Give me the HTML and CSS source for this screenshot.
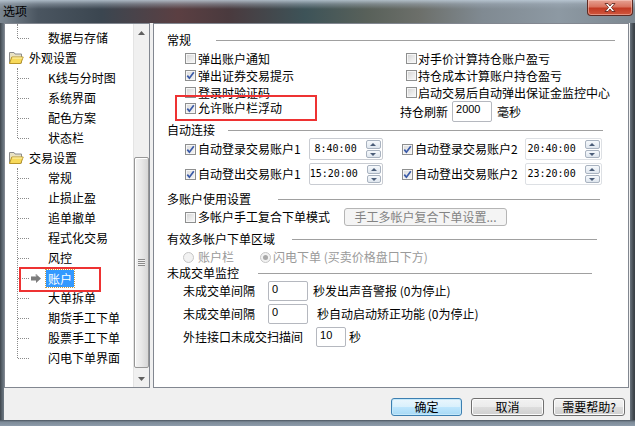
FILE: index.html
```html
<!DOCTYPE html>
<html lang="zh-CN">
<head>
<meta charset="utf-8">
<title>选项</title>
<link rel="stylesheet" href="styles.css">
</head>
<body>
<div class="window">
  <div class="titlebar">
    <span class="title">选项</span>
    <div class="close">
      <svg width="14" height="11" viewBox="0 0 14 11"><path d="M2 1.5h3l2 2.5 2-2.5h3l-3.5 4 3.5 4h-3L7 7 5 9.5H2l3.5-4z" fill="#fff" stroke="#5a1a12" stroke-width="0.8"/></svg>
    </div>
  </div>
  <div class="frame">
    <div class="client">
      <div class="main">
        <div class="tree">
          <div class="tree-body">
            <div class="children first">
              <div class="leaf">数据与存储</div>
            </div>
            <div class="folder">
              <svg class="ficon" width="16" height="14" viewBox="0 0 16 14"><path d="M1.5 1.5h4.5l1 1.5h6.5v9h-12z" fill="#e9e2c4" stroke="#8c8c8c"/><path d="M1.5 12.5l2.3-6.5h11.4l-2.4 6.5z" fill="#f7d95a" stroke="#b8962a"/><path d="M4.3 7h10.2" stroke="#fff4b8"/></svg>
              <span>外观设置</span>
            </div>
            <div class="children">
              <div class="leaf">K线与分时图</div>
              <div class="leaf">系统界面</div>
              <div class="leaf">配色方案</div>
              <div class="leaf">状态栏</div>
            </div>
            <div class="folder">
              <svg class="ficon" width="16" height="14" viewBox="0 0 16 14"><path d="M1.5 1.5h4.5l1 1.5h6.5v9h-12z" fill="#e9e2c4" stroke="#8c8c8c"/><path d="M1.5 12.5l2.3-6.5h11.4l-2.4 6.5z" fill="#f7d95a" stroke="#b8962a"/><path d="M4.3 7h10.2" stroke="#fff4b8"/></svg>
              <span>交易设置</span>
            </div>
            <div class="children">
              <div class="leaf">常规</div>
              <div class="leaf">止损止盈</div>
              <div class="leaf">追单撤单</div>
              <div class="leaf">程式化交易</div>
              <div class="leaf">风控</div>
              <div class="leaf current">
                <svg class="arrow" width="10" height="9" viewBox="0 0 10 9"><path d="M0 2.5h5V0l5 4.5L5 9V6.5H0z" fill="#7c7c7c"/><path d="M0 2.5h5V0l2 1.8" fill="none" stroke="#b8b8b8"/></svg>
                <span class="sel">账户</span>
                <div class="mark"></div>
              </div>
              <div class="leaf">大单拆单</div>
              <div class="leaf">期货手工下单</div>
              <div class="leaf">股票手工下单</div>
              <div class="leaf">闪电下单界面</div>
            </div>
          </div>
          <div class="vscroll">
            <div class="sbtn"><svg width="7" height="4" viewBox="0 0 7 4"><path d="M0 4L3.5 0 7 4z" fill="#5f5f5f"/></svg></div>
            <div class="track"><div class="thumb"><span class="grip"></span></div></div>
            <div class="sbtn"><svg width="7" height="4" viewBox="0 0 7 4"><path d="M0 0h7L3.5 4z" fill="#5f5f5f"/></svg></div>
          </div>
        </div>

        <div class="panel">
          <div class="gh g1"><span>常规</span><i class="line"></i></div>
          <div class="cbgrid">
            <label class="cb"><span class="box"></span>弹出账户通知</label>
            <label class="cb r"><span class="box"></span>对手价计算持仓账户盈亏</label>
            <label class="cb"><span class="box on"><svg width="9" height="9" viewBox="0 0 9 9"><path d="M1.3 4.6l2.1 2.6L7.8 1.2" fill="none" stroke="#3a5aa8" stroke-width="1.7"/></svg></span>弹出证券交易提示</label>
            <label class="cb r"><span class="box"></span>持仓成本计算账户持仓盈亏</label>
            <label class="cb"><span class="box"></span>登录时验证码</label>
            <label class="cb r"><span class="box"></span>启动交易后自动弹出保证金监控中心</label>
          </div>
          <div class="row4">
            <label class="cb top"><span class="box on"><svg width="9" height="9" viewBox="0 0 9 9"><path d="M1.3 4.6l2.1 2.6L7.8 1.2" fill="none" stroke="#3a5aa8" stroke-width="1.7"/></svg></span>允许账户栏浮动<span class="mark2"></span></label>
            <div class="refresh"><span>持仓刷新</span><span class="input w39">2000</span><span class="ms">毫秒</span></div>
          </div>

          <div class="gh g2"><span>自动连接</span><i class="line"></i></div>
          <div class="spinrow">
            <div class="half l">
              <label class="cb"><span class="box on"><svg width="9" height="9" viewBox="0 0 9 9"><path d="M1.3 4.6l2.1 2.6L7.8 1.2" fill="none" stroke="#3a5aa8" stroke-width="1.7"/></svg></span>自动登录交易账户1</label>
              <div class="spin s1"><span class="val">8:40:00</span><span class="arrows"><i class="up"></i><i class="dn"></i></span></div>
            </div>
            <div class="half r">
              <label class="cb"><span class="box on"><svg width="9" height="9" viewBox="0 0 9 9"><path d="M1.3 4.6l2.1 2.6L7.8 1.2" fill="none" stroke="#3a5aa8" stroke-width="1.7"/></svg></span>自动登录交易账户2</label>
              <div class="spin s2"><span class="val">20:40:00</span><span class="arrows"><i class="up"></i><i class="dn"></i></span></div>
            </div>
          </div>
          <div class="spinrow second">
            <div class="half l">
              <label class="cb"><span class="box on"><svg width="9" height="9" viewBox="0 0 9 9"><path d="M1.3 4.6l2.1 2.6L7.8 1.2" fill="none" stroke="#3a5aa8" stroke-width="1.7"/></svg></span>自动登出交易账户1</label>
              <div class="spin s1"><span class="val">15:20:00</span><span class="arrows"><i class="up"></i><i class="dn"></i></span></div>
            </div>
            <div class="half r">
              <label class="cb"><span class="box on"><svg width="9" height="9" viewBox="0 0 9 9"><path d="M1.3 4.6l2.1 2.6L7.8 1.2" fill="none" stroke="#3a5aa8" stroke-width="1.7"/></svg></span>自动登出交易账户2</label>
              <div class="spin s2"><span class="val">23:20:00</span><span class="arrows"><i class="up"></i><i class="dn"></i></span></div>
            </div>
          </div>

          <div class="gh g3"><span>多账户使用设置</span><i class="line"></i></div>
          <div class="btnrow">
            <label class="cb"><span class="box"></span>多帐户手工复合下单模式</label>
            <span class="dbtn">手工多帐户复合下单设置...</span>
          </div>

          <div class="gh g4"><span>有效多帐户下单区域</span><i class="line"></i></div>
          <div class="radiorow">
            <label class="rb"><span class="radio"></span>账户栏</label>
            <label class="rb second"><span class="radio on"></span>闪电下单 (买卖价格盘口下方)</label>
          </div>

          <div class="gh g5"><span>未成交单监控</span><i class="line"></i></div>
          <div class="inrow">
            <span class="lbl">未成交单间隔</span><span class="input w40">0</span><span class="after a1">秒发出声音警报 (0为停止)</span>
          </div>
          <div class="inrow">
            <span class="lbl">未成交单间隔</span><span class="input w40">0</span><span class="after a2">秒自动启动矫正功能 (0为停止)</span>
          </div>
          <div class="inrow">
            <span class="lbl">外挂接口未成交扫描间</span><span class="input w30">10</span><span class="after a3">秒</span>
          </div>
        </div>
      </div>
      <div class="footer">
        <button class="btn default">确定</button>
        <button class="btn b2">取消</button>
        <button class="btn b3">需要帮助?</button>
      </div>
    </div>
  </div>
</div>
</body>
</html>
```

FILE: styles.css
```css
* { box-sizing: border-box; }

body {
  margin: 0;
  width: 635px;
  height: 426px;
  overflow: hidden;
  font-family: "Noto Sans CJK SC", "Liberation Sans", sans-serif;
  font-size: 12px;
  line-height: 14px;
  color: #000;
  background: #56606a;
}

.window {
  width: 635px;
  height: 426px;
  display: flex;
  flex-direction: column;
  background:
    linear-gradient(90deg, #3e454c 0, #5a646d 2px, #6f7a84 4px, transparent 4px, transparent 630px, #6a747e 630px, #3b4248 634px);
}

.titlebar {
  height: 23px;
  flex: none;
  display: flex;
  justify-content: space-between;
  align-items: flex-start;
  padding-left: 3px;
  background:
    linear-gradient(180deg, rgba(190,204,216,0.85) 0, rgba(160,172,184,0.5) 4px, rgba(90,100,110,0) 9px),
    linear-gradient(90deg, #7c8791 0, #4a5560 6%, #3b4650 16%, #5b3f42 28%, #4a3a3e 36%, #3d5358 48%, #59615a 58%, #6c6f6a 66%, #808a92 76%, #8d99a3 88%, #7d8891 100%);
}

.title {
  margin-top: 4px;
  font-size: 12px;
  line-height: 14px;
  color: #000;
}

.close {
  width: 46px;
  height: 16px;
  margin-right: 2px;
  border: 1px solid #5e2a22;
  border-top: none;
  border-radius: 0 0 4px 4px;
  background: linear-gradient(180deg, #e6a294 0, #d9735f 45%, #c23a24 55%, #d0583e 100%);
  box-shadow: inset 0 0 0 1px rgba(255,220,210,0.45);
  display: flex;
  align-items: center;
  justify-content: center;
}

.frame {
  flex: 1;
  display: flex;
  flex-direction: column;
  padding: 0 5px 6px 4px;
  background: linear-gradient(180deg, transparent 0, transparent 397px, #4a545e 397px, #7d8b98 399px, #8e9cab 403px);
}

.client {
  flex: 1;
  background: #f0f0f0;
  display: flex;
  flex-direction: column;
}

.main {
  height: 365px;
  display: flex;
  gap: 3px;
  padding-right: 1px;
}

/* ---------- tree ---------- */
.tree {
  width: 146px;
  flex: none;
  border: 1px solid #828790;
  background: #fff;
  display: flex;
}

.tree-body {
  width: 128px;
  padding-top: 4px;
  overflow: hidden;
}

.children {
  position: relative;
}

.children::before {
  content: "";
  position: absolute;
  left: 12px;
  top: 0;
  bottom: 10px;
  border-left: 1px dotted #8a8a8a;
}

.children.first::before {
  top: -4px;
}

.leaf {
  position: relative;
  height: 20px;
  line-height: 20px;
  padding-left: 43px;
  white-space: nowrap;
}

.leaf::before {
  content: "";
  position: absolute;
  left: 13px;
  top: 10px;
  width: 11px;
  border-top: 1px dotted #8a8a8a;
}

.folder {
  height: 20px;
  display: flex;
  align-items: center;
  padding-left: 3px;
  gap: 5px;
  white-space: nowrap;
}

.ficon { flex: none; }

.current .arrow {
  position: absolute;
  left: 26px;
  top: 6px;
}

.sel {
  display: inline-block;
  margin-left: -2px;
  padding: 0 2px;
  height: 17px;
  line-height: 17px;
  vertical-align: top;
  margin-top: 2px;
  background: #3399ff;
  color: #fff;
  outline: 1px dotted #c89a40;
}

.mark {
  position: absolute;
  left: 14px;
  top: -1px;
  width: 82px;
  height: 25px;
  border: 2px solid #ee3232;
}

/* scrollbar */
.vscroll {
  width: 16px;
  flex: none;
  margin-left: auto;
  display: flex;
  flex-direction: column;
  background: #f0f0f0;
  border-left: 1px solid #e4e4e4;
}

.sbtn {
  height: 17px;
  flex: none;
  display: flex;
  align-items: center;
  justify-content: center;
}

.track {
  flex: 1;
  padding-top: 116px;
}

.thumb {
  height: 211px;
  margin: 0 0 0 0;
  border: 1px solid #979797;
  border-radius: 2px;
  background: linear-gradient(90deg, #f4f4f4 0, #e8e8e8 50%, #d6d6d6 100%);
  box-shadow: inset 1px 1px 0 #fff;
  display: flex;
  align-items: center;
  justify-content: center;
}

.grip {
  width: 7px;
  height: 7px;
  background: repeating-linear-gradient(180deg, #8a8a8a 0, #8a8a8a 1px, #f0f0f0 1px, #f0f0f0 2px);
}

/* ---------- panel ---------- */
.panel {
  flex: 1;
  background: #fff;
  border: 1px solid #828790;
  padding: 8px 0 0 13px;
  display: flex;
  flex-direction: column;
}

.gh {
  height: 16px;
  flex: none;
  display: flex;
  align-items: center;
  white-space: nowrap;
}

.gh .line {
  flex: 1;
  height: 1px;
  background: #a0a0a0;
}

.g1 .line { margin: 1px 13px 0 25px; }
.g2 .line { margin: 1px 25px 0 13px; }
.g3 { margin-top: 6px; }
.g3 .line { margin: 1px 28px 0 27px; }
.g4 { margin-top: 5px; }
.g4 .line { margin: 1px 31px 0 17px; }
.g5 .line { margin: 1px 36px 0 19px; }

.cb {
  display: flex;
  align-items: center;
  gap: 2px;
  white-space: nowrap;
}

.box {
  width: 11px;
  height: 11px;
  flex: none;
  border: 1px solid #8e8f8f;
  background: linear-gradient(135deg, #d2d2d2 0, #ececec 60%, #f8f8f8 100%);
  box-shadow: inset 0 0 0 1px #f6f6f6;
  display: flex;
  align-items: center;
  justify-content: center;
}

.box.on {
  background: linear-gradient(135deg, #dcdcdc 0, #f4f4f4 100%);
}

.cbgrid {
  margin-top: 2px;
  display: grid;
  grid-template-columns: 233px 1fr;
  grid-auto-rows: 17px;
}

.cbgrid .cb { padding-left: 18px; }
.cbgrid .cb.r { padding-left: 6px; gap: 1px; }

.row4 {
  height: 21px;
  display: grid;
  grid-template-columns: 233px 1fr;
}

.row4 .cb.top {
  align-self: start;
  padding-left: 18px;
  position: relative;
}

.mark2 {
  position: absolute;
  left: 8px;
  top: -6px;
  width: 142px;
  height: 26px;
  border: 2px solid #ee3232;
}

.refresh {
  display: flex;
  align-items: center;
  white-space: nowrap;
}

.input {
  display: inline-block;
  border: 1px solid #b5b8bf;
  border-radius: 2px;
  background: #fff;
  font-family: "Liberation Sans", sans-serif;
  font-size: 11px;
  line-height: 12px;
  padding: 1px 3px;
}

.w39 { width: 40px; height: 21px; margin-left: 4px; }
.ms { margin-left: 5px; }

.spinrow {
  height: 22px;
  display: grid;
  grid-template-columns: 233px 1fr;
}

.spinrow.second { margin-top: 3px; }

.half {
  display: flex;
  align-items: center;
}

.half.l { padding-left: 18px; }
.half.r { padding-left: 2px; }

.spin {
  height: 22px;
  margin-left: 8px;
  border: 1px solid #c9ccd2;
  border-radius: 2px;
  display: flex;
  align-items: center;
}

.spin.s1 { width: 74px; }
.spin.s2 { width: 77px; margin-left: 7px; border-color: #dde0e4; }

.val {
  flex: 1;
  text-align: right;
  padding-right: 9px;
  font-family: "DejaVu Sans Mono", monospace;
  font-size: 10px;
}

.arrows {
  width: 15px;
  height: 18px;
  margin-right: 1px;
  display: flex;
  flex-direction: column;
  gap: 1px;
}

.arrows i {
  flex: 1;
  border: 1px solid #a9b3c0;
  border-radius: 2px;
  background: linear-gradient(180deg, #f6f9fc 0, #dfe6ee 100%);
  position: relative;
}

.arrows i::after {
  content: "";
  position: absolute;
  left: 3px;
  top: 2px;
  border-left: 3.5px solid transparent;
  border-right: 3.5px solid transparent;
}

.arrows .up::after { border-bottom: 3px solid #4b5d78; }
.arrows .dn::after { border-top: 3px solid #4b5d78; }

.btnrow {
  height: 18px;
  margin-top: 1px;
  display: flex;
  align-items: center;
  padding-left: 18px;
}

.dbtn {
  margin-left: 14px;
  width: 163px;
  height: 18px;
  border: 1px solid #b5b5b5;
  border-radius: 3px;
  background: #f4f4f4;
  color: #838383;
  text-align: center;
  line-height: 16px;
  white-space: nowrap;
}

.radiorow {
  height: 16px;
  margin-top: 2px;
  display: flex;
  align-items: center;
  padding-left: 16px;
  color: #9a9a9a;
}

.rb {
  display: flex;
  align-items: center;
  gap: 4px;
  white-space: nowrap;
}

.rb.second { margin-left: 26px; gap: 2px; }

.radio {
  width: 11px;
  height: 11px;
  border: 1px solid #c6c6c6;
  border-radius: 50%;
  background: #f2f2f2;
  display: flex;
  align-items: center;
  justify-content: center;
}

.radio.on::after {
  content: "";
  width: 5px;
  height: 5px;
  border-radius: 50%;
  background: #a8a8a8;
}

.inrow {
  height: 20px;
  display: flex;
  align-items: center;
  padding-left: 16px;
  white-space: nowrap;
}

.inrow + .inrow { margin-top: 3px; }

.w40 { width: 40px; height: 20px; margin-left: 13px; }
.w30 { width: 30px; height: 20px; margin-left: 13px; }
.a1 { margin-left: 5px; }
.a2 { margin-left: 9px; }
.a3 { margin-left: 3px; }

/* ---------- footer ---------- */
.footer {
  flex: 1;
  display: flex;
  justify-content: flex-end;
  align-items: flex-start;
  gap: 9px;
  padding: 10px 5px 0 0;
}

.btn {
  height: 18px;
  padding: 0;
  font-family: "Noto Sans CJK SC", "Liberation Sans", sans-serif;
  font-size: 12px;
  line-height: 14px;
  color: #000;
  border: 1px solid #707070;
  border-radius: 3px;
  background: linear-gradient(180deg, #f2f2f2 0, #ebebeb 50%, #dddddd 51%, #cfcfcf 100%);
  box-shadow: inset 0 0 0 1px #fcfcfc;
}

.btn.default {
  width: 71px;
  border-color: #3c7fb1;
  background: linear-gradient(180deg, #eaf6fd 0, #d9f0fc 50%, #bee6fd 51%, #a7d9f5 100%);
  box-shadow: inset 0 0 0 1px #c4e8fa;
}

.b2 { width: 73px; }
.b3 { width: 72px; }
```
